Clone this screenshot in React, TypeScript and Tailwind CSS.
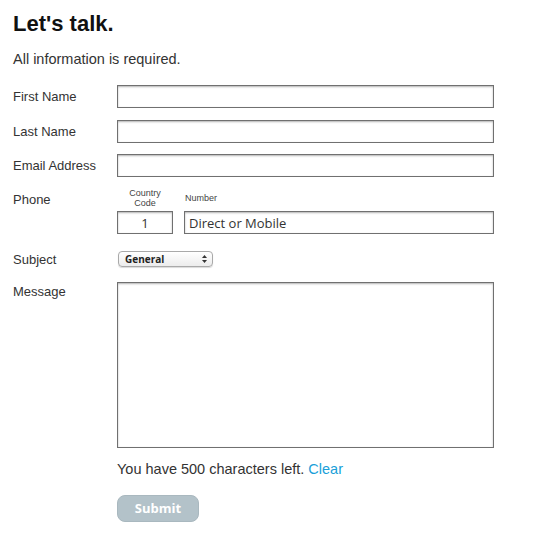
import React from 'react';

const inputCls =
  'h-[23px] border border-[#707070] bg-white shadow-[inset_0_1px_2px_rgba(0,0,0,0.3)] outline-none';

function Row({ label, children }: { label: string; children?: React.ReactNode }) {
  return (
    <div className="flex items-center">
      <label className="w-[104px] text-[13px] leading-[16px] text-[#333]">{label}</label>
      {children}
    </div>
  );
}

export default function App() {
  return (
    <div className="w-[535px] h-[554px] bg-white px-[13px] font-['Liberation_Sans',Arial,sans-serif] text-[#333]">
      <h1 className="pt-[11px] text-[22px] leading-[26px] font-bold text-[#111]">Let's talk.</h1>
      <p className="mt-[13px] text-[14.5px] leading-[18px] text-[#333]">All information is required.</p>

      <form className="mt-[17px]">
        <Row label="First Name">
          <input className={`${inputCls} w-[377px]`} />
        </Row>
        <div className="mt-[12px]">
          <Row label="Last Name">
            <input className={`${inputCls} w-[377px]`} />
          </Row>
        </div>
        <div className="mt-[11px]">
          <Row label="Email Address">
            <input className={`${inputCls} w-[377px]`} />
          </Row>
        </div>

        {/* phone */}
        <div className="mt-[11px] flex">
          <label className="w-[104px] pt-[4px] text-[13px] leading-[16px] text-[#333]">Phone</label>
          <div className="flex gap-[11px]">
            <div className="flex w-[56px] flex-col items-center">
              <div className="flex h-[20px] items-center text-center text-[9px] leading-[10px] text-[#444]">
                Country
                <br />
                Code
              </div>
              <input
                defaultValue="1"
                className={`${inputCls} mt-[3px] w-[56px] text-center font-['Open_Sans',sans-serif] text-[13px] text-[#333]`}
              />
            </div>
            <div className="flex flex-col">
              <div className="flex h-[20px] items-center pl-[1px] text-[9px] leading-[10px] text-[#444]">Number</div>
              <input
                defaultValue="Direct or Mobile"
                className={`${inputCls} mt-[3px] w-[310px] pl-[4px] font-['Open_Sans',sans-serif] text-[13px] text-[#333]`}
              />
            </div>
          </div>
        </div>

        {/* subject */}
        <div className="mt-[17px] flex h-[16px] items-center">
          <label className="w-[104px] translate-y-[1px] text-[13px] leading-[16px] text-[#333]">Subject</label>
          <div className="ml-[1px] flex h-[16px] w-[95px] items-center justify-between rounded-[4px] border border-[#a9a9a9] bg-gradient-to-b from-white to-[#ececec] pl-[6px] pr-[5px] shadow-[0_1px_1px_rgba(0,0,0,0.15)]">
            <span className="font-['Open_Sans',sans-serif] text-[10px] font-bold leading-[12px] text-[#222]">General</span>
            <svg width="5" height="8" viewBox="0 0 5 8">
              <path d="M2.5 0L5 3H0z" fill="#333" />
              <path d="M2.5 8L5 5H0z" fill="#333" />
            </svg>
          </div>
        </div>

        {/* message */}
        <div className="mt-[15px] flex">
          <label className="w-[104px] pt-[2px] text-[13px] leading-[16px] text-[#333]">Message</label>
          <textarea className="h-[166px] w-[377px] resize-none border border-[#707070] bg-white shadow-[inset_0_1px_2px_rgba(0,0,0,0.3)] outline-none" />
        </div>

        <p className="ml-[104px] mt-[12px] text-[14.5px] leading-[18px] text-[#333]">
          You have 500 characters left. <span className="text-[#1a9fd9]">Clear</span>
        </p>

        <button
          type="button"
          className="ml-[104px] mt-[17px] h-[27px] w-[82px] rounded-[8px] border border-[#a9b8bf] bg-[#b3c2c9] font-['Open_Sans',sans-serif] text-[13px] font-bold text-white"
        >
          Submit
        </button>
      </form>
    </div>
  );
}
